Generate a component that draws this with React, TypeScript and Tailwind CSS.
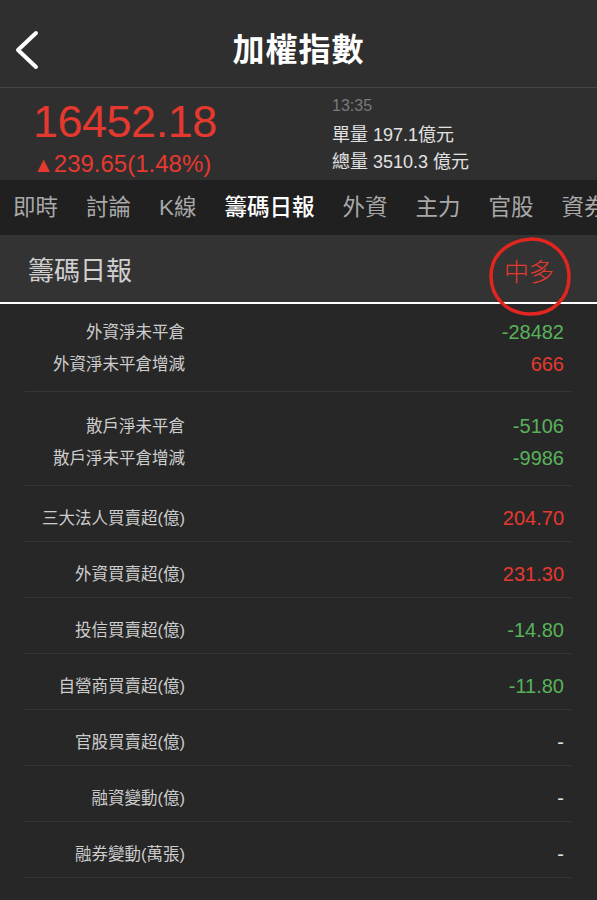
type Row = { label: string; value: string; tone: "up" | "down" | "none" };

const groups: Row[][] = [
  [
    { label: "外資淨未平倉", value: "-28482", tone: "down" },
    { label: "外資淨未平倉增減", value: "666", tone: "up" },
  ],
  [
    { label: "散戶淨未平倉", value: "-5106", tone: "down" },
    { label: "散戶淨未平倉增減", value: "-9986", tone: "down" },
  ],
];

const rows: Row[] = [
  { label: "三大法人買賣超(億)", value: "204.70", tone: "up" },
  { label: "外資買賣超(億)", value: "231.30", tone: "up" },
  { label: "投信買賣超(億)", value: "-14.80", tone: "down" },
  { label: "自營商買賣超(億)", value: "-11.80", tone: "down" },
  { label: "官股買賣超(億)", value: "-", tone: "none" },
  { label: "融資變動(億)", value: "-", tone: "none" },
  { label: "融券變動(萬張)", value: "-", tone: "none" },
];

const tabs = ["即時", "討論", "K線", "籌碼日報", "外資", "主力", "官股", "資券"];

function toneClass(tone: Row["tone"]) {
  if (tone === "up") return "text-[#e5392f]";
  if (tone === "down") return "text-[#58b25b]";
  return "text-[#e0e0e0]";
}

function Line({ row }: { row: Row }) {
  return (
    <div className="flex items-center h-[32px]">
      <div className="w-[160px] text-right text-[16.5px] text-[#cdcdcd]">{row.label}</div>
      <div className={`flex-1 text-right text-[20px] pr-[8px] ${toneClass(row.tone)}`}>{row.value}</div>
    </div>
  );
}

export default function App() {
  return (
    <div
      className="w-[597px] h-[900px] overflow-hidden bg-[#272727]"
      style={{ fontFamily: '"Liberation Sans", "Noto Sans CJK TC", sans-serif' }}
    >
      {/* Nav bar */}
      <div className="grid grid-cols-[60px_1fr_60px] items-center h-[88px] pt-[12px] bg-[#2f2f2f] border-b border-[#454545]">
        <div className="pl-[13px]">
          <svg width="28" height="40" viewBox="0 0 28 40" fill="none">
            <path
              d="M23 3 L5 20 L23 37"
              stroke="white"
              strokeWidth="4"
              strokeLinecap="round"
              strokeLinejoin="round"
            />
          </svg>
        </div>
        <h1 className="text-center text-[32px] font-bold text-white tracking-[1px]">加權指數</h1>
        <div />
      </div>

      {/* Quote */}
      <div className="flex h-[92px] bg-[#2f2f2f]">
        <div className="w-[332px] pl-[33px] pt-[10px]">
          <div className="text-[45px] leading-[48px] tracking-[-0.5px] text-[#e5392f]">16452.18</div>
          <div className="text-[24px] leading-[28px] mt-[4px] text-[#e5392f]">
            <span className="text-[21px]">▲</span>239.65(1.48%)
          </div>
        </div>
        <div className="pt-[8px] text-[#e2e2e2]">
          <div className="text-[16px] leading-[20px] text-[#7a7a7a]">13:35</div>
          <div className="text-[18px] leading-[27px] mt-[6px]">單量 197.1億元</div>
          <div className="text-[18px] leading-[27px]">總量 3510.3 億元</div>
        </div>
      </div>

      {/* Tabs */}
      <div className="flex items-center gap-[28px] h-[55px] pl-[13px] bg-[#202020] whitespace-nowrap overflow-hidden">
        {tabs.map((t) => (
          <span
            key={t}
            className={`text-[22.5px] ${t === "籌碼日報" ? "text-white font-medium" : "text-[#a8a8a8]"}`}
          >
            {t}
          </span>
        ))}
      </div>

      {/* Section header */}
      <div className="relative flex items-center justify-between h-[69px] pt-[6px] pl-[28px] pr-[43px] bg-[#333333] border-b-[2px] border-white">
        <span className="text-[26px] text-[#cfcfcf]">籌碼日報</span>
        <span className="text-[25px] font-light text-[#e5392f] pt-[2px]">中多</span>
        <svg
          className="absolute left-[488px] top-[1px] z-10"
          width="84"
          height="82"
          viewBox="0 0 84 82"
          fill="none"
        >
          <path
            d="M42 3 C63 2 81 18 81 41 C81 63 64 79 41 78 C19 77 3 62 3 40 C3 18 21 4 44 3"
            stroke="#e2261f"
            strokeWidth="3.5"
            strokeLinecap="round"
          />
        </svg>
      </div>

      {/* List */}
      <div className="px-[25px]">
        {groups.map((g, i) => (
          <div
            key={i}
            className={`border-b border-[#363636] pb-[11px] ${i === 0 ? "pt-[12px]" : "pt-[18px]"}`}
          >
            {g.map((r) => (
              <Line key={r.label} row={r} />
            ))}
          </div>
        ))}
        {rows.map((r) => (
          <div key={r.label} className="border-b border-[#363636] pt-[16px] pb-[7px]">
            <Line row={r} />
          </div>
        ))}
      </div>
    </div>
  );
}
